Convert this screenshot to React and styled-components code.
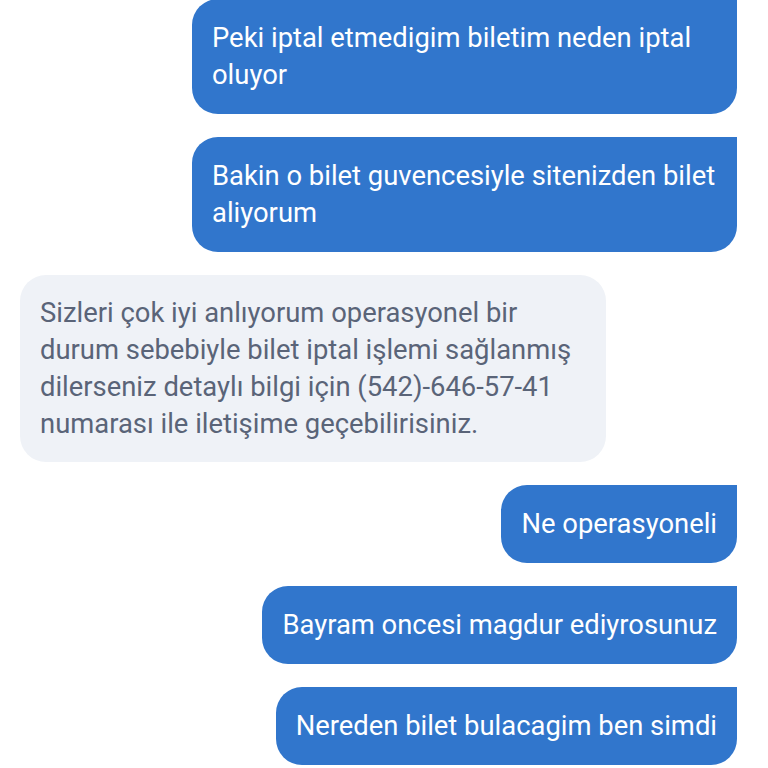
import styled, { createGlobalStyle } from 'styled-components';

const messages = [
  { id: 1, from: 'me', text: 'Peki iptal etmedigim biletim neden iptal oluyor' },
  { id: 2, from: 'me', text: 'Bakin o bilet guvencesiyle sitenizden bilet aliyorum' },
  {
    id: 3,
    from: 'agent',
    text: 'Sizleri çok iyi anlıyorum operasyonel bir durum sebebiyle bilet iptal işlemi sağlanmış dilerseniz detaylı bilgi için (542)-646-57-41 numarası ile iletişime geçebilirisiniz.',
  },
  { id: 4, from: 'me', text: 'Ne operasyoneli' },
  { id: 5, from: 'me', text: 'Bayram oncesi magdur ediyrosunuz' },
  { id: 6, from: 'me', text: 'Nereden bilet bulacagim ben simdi' },
];

export default function App() {
  return (
    <>
      <GlobalStyle />
      <Thread>
        {messages.map((msg) => (
          <Bubble key={msg.id} $mine={msg.from === 'me'}>
            {msg.text}
          </Bubble>
        ))}
      </Thread>
    </>
  );
}

const GlobalStyle = createGlobalStyle`
  html, body {
    margin: 0;
    background: #ffffff;
    height: 768px;
    overflow: hidden;
  }
  body {
    font-family: Roboto, "Noto Sans", sans-serif;
  }
`;

const Thread = styled.div`
  display: flex;
  flex-direction: column;
  gap: 23px;
  margin-top: -1px;
  padding: 0 31px 0 20px;
`;

const Bubble = styled.div`
  align-self: ${({ $mine }) => ($mine ? 'flex-end' : 'flex-start')};
  max-width: ${({ $mine }) => ($mine ? '505px' : '546px')};
  padding: ${({ $mine }) => ($mine ? '20.5px 20px' : '19.5px 20px')};
  border-radius: 26px;
  border-top-right-radius: ${({ $mine }) => ($mine ? '0' : '26px')};
  background: ${({ $mine }) => ($mine ? '#3176cc' : '#eff2f7')};
  color: ${({ $mine }) => ($mine ? '#ffffff' : '#5a6478')};
  font-size: 27.4px;
  line-height: 37px;
`;
